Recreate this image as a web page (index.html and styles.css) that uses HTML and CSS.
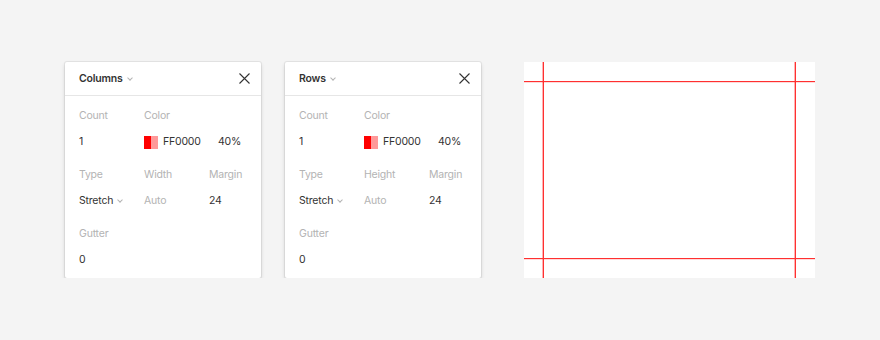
FILE: index.html
```html
<!DOCTYPE html>
<html lang="en">
<head>
    <meta charset="UTF-8">
    <title>Layout Grid</title>
    <link rel="stylesheet" href="styles.css">
</head>
<body>
    <div class="stage">
        <div class="panel">
            <div class="panel-header">
                <span class="title">Columns <span class="chevron"></span></span>
                <svg class="close" width="11" height="11" viewBox="0 0 11 11">
                    <path d="M0.5 0.5 L10.5 10.5 M10.5 0.5 L0.5 10.5" stroke="#333" stroke-width="1.1" fill="none"/>
                </svg>
            </div>
            <div class="panel-body">
                <div class="field">
                    <div class="label">Count</div>
                    <div class="value">1</div>
                </div>
                <div class="field wide">
                    <div class="label">Color</div>
                    <div class="value color-value">
                        <span class="swatch"><span class="solid"></span><span class="faded"></span></span>
                        <span class="hex">FF0000</span>
                        <span class="opacity">40%</span>
                    </div>
                </div>
                <div class="field">
                    <div class="label">Type</div>
                    <div class="value">Stretch <span class="chevron"></span></div>
                </div>
                <div class="field">
                    <div class="label">Width</div>
                    <div class="value muted">Auto</div>
                </div>
                <div class="field">
                    <div class="label">Margin</div>
                    <div class="value">24</div>
                </div>
                <div class="field">
                    <div class="label">Gutter</div>
                    <div class="value">0</div>
                </div>
            </div>
        </div>

        <div class="panel">
            <div class="panel-header">
                <span class="title">Rows <span class="chevron"></span></span>
                <svg class="close" width="11" height="11" viewBox="0 0 11 11">
                    <path d="M0.5 0.5 L10.5 10.5 M10.5 0.5 L0.5 10.5" stroke="#333" stroke-width="1.1" fill="none"/>
                </svg>
            </div>
            <div class="panel-body">
                <div class="field">
                    <div class="label">Count</div>
                    <div class="value">1</div>
                </div>
                <div class="field wide">
                    <div class="label">Color</div>
                    <div class="value color-value">
                        <span class="swatch"><span class="solid"></span><span class="faded"></span></span>
                        <span class="hex">FF0000</span>
                        <span class="opacity">40%</span>
                    </div>
                </div>
                <div class="field">
                    <div class="label">Type</div>
                    <div class="value">Stretch <span class="chevron"></span></div>
                </div>
                <div class="field">
                    <div class="label">Height</div>
                    <div class="value muted">Auto</div>
                </div>
                <div class="field">
                    <div class="label">Margin</div>
                    <div class="value">24</div>
                </div>
                <div class="field">
                    <div class="label">Gutter</div>
                    <div class="value">0</div>
                </div>
            </div>
        </div>

        <!-- preview frame with the grid overlay -->
        <div class="canvas">
            <div class="line v left"></div>
            <div class="line v right"></div>
            <div class="line h top"></div>
            <div class="line h bottom"></div>
        </div>
    </div>
</body>
</html>
```

FILE: styles.css
```css
body {
    margin: 0;
    background-color: #f4f4f4;
    font-family: Inter, "Noto Sans", sans-serif;
    font-size: 10.5px;
    letter-spacing: -0.2px;
    color: #333;
}
.stage {
    display: flex;
    align-items: flex-start;
    padding: 62px 0 0 65px;
}
.panel {
    width: 196px;
    background-color: white;
    border-radius: 2px;
    box-shadow: 0 0 0 1px rgba(0, 0, 0, 0.06), 0 2px 4px rgba(0, 0, 0, 0.14);
    margin-right: 24px;
}
.panel-header {
    height: 33px;
    border-bottom: 1px solid #e6e6e6;
    display: flex;
    align-items: center;
    justify-content: space-between;
    padding: 0 11px 0 14px;
}
.title {
    font-weight: 600;
    display: flex;
    align-items: center;
}
.chevron {
    display: inline-block;
    width: 3px;
    height: 3px;
    border-right: 1px solid #b3b3b3;
    border-bottom: 1px solid #b3b3b3;
    transform: rotate(45deg);
    margin: -2px 0 0 5px;
}
.panel-body {
    display: grid;
    grid-template-columns: 65px 65px 52px;
    row-gap: 17px;
    padding: 12px 0 10px 14px;
}
.field.wide {
    grid-column: span 2;
}
.label {
    height: 16px;
    line-height: 16px;
    color: #b3b3b3;
    margin-bottom: 10px;
}
.value {
    height: 16px;
    line-height: 16px;
    display: flex;
    align-items: center;
}
.value.muted {
    color: #b3b3b3;
}
.color-value {
    width: 97px;
}
.swatch {
    display: flex;
    width: 14px;
    height: 13px;
    margin-right: 5px;
}
.swatch .solid {
    width: 7px;
    background-color: #ff0000;
}
.swatch .faded {
    width: 7px;
    background-color: #ff9999;
}
.hex {
    flex: 1;
}
.canvas {
    position: relative;
    width: 291px;
    height: 216px;
    background-color: white;
    margin-left: 19px;
    overflow: hidden;
}
.line {
    position: absolute;
    background-color: #ff3030;
}
.line.v {
    top: 0;
    bottom: 0;
    width: 1px;
    box-shadow: -1px 0 0 rgba(255, 0, 0, 0.3);
}
.line.h {
    left: 0;
    right: 0;
    height: 1px;
    box-shadow: 0 1px 0 rgba(255, 0, 0, 0.15);
}
.line.left {
    left: 19px;
}
.line.right {
    right: 19px;
}
.line.top {
    top: 19px;
}
.line.bottom {
    bottom: 19px;
}
```
